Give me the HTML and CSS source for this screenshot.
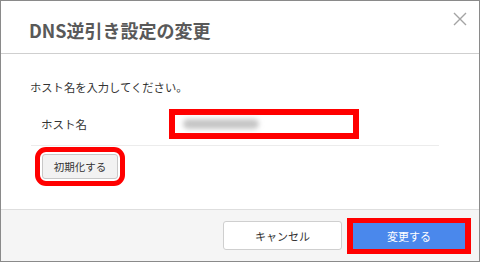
FILE: index.html
```html
<!DOCTYPE html>
<html lang="ja">
<head>
<meta charset="utf-8">
<link rel="stylesheet" href="styles.css">
</head>
<body>
<div class="dialog">
  <div class="header">
    <div class="title">DNS逆引き設定の変更</div>
    <div class="close"><svg width="14" height="14" viewBox="0 0 14 14"><path d="M1 1 L13 13 M13 1 L1 13" stroke="#a4a4a4" stroke-width="1.4" fill="none"/></svg></div>
  </div>
  <div class="body">
    <div class="intro">ホスト名を入力してください。</div>
    <div class="row">
      <div class="label">ホスト名</div>
      <div class="mark-box">
        <div class="input"><span class="blurred"></span></div>
      </div>
    </div>
    <div class="mark-round">
      <button class="btn-reset">初期化する</button>
    </div>
  </div>
  <div class="footer">
    <button class="btn-cancel">キャンセル</button>
    <div class="mark-primary">
      <button class="btn-primary">変更する</button>
    </div>
  </div>
</div>
</body>
</html>
```

FILE: styles.css
```css
* { box-sizing: border-box; }
html, body { margin: 0; padding: 0; background: #fff; }
body { font-family: "Noto Sans CJK JP", "Noto Sans", sans-serif; color: #333; }

.dialog {
  width: 480px;
  height: 262px;
  border: 1px solid #8a8a8a;
  display: flex;
  flex-direction: column;
  background: #fff;
}

.header {
  height: 53px;
  border-bottom: 1px solid #cfcfcf;
  display: flex;
  justify-content: space-between;
  align-items: flex-start;
  padding: 0 12px 0 28px;
  flex: none;
}
.title {
  margin-top: 18px;
  font-size: 18px;
  line-height: 22px;
  font-weight: bold;
  color: #595959;
}
.close {
  margin-top: 11px;
  width: 14px;
  height: 14px;
}
.close svg { display: block; }

.body {
  flex: 1;
  padding: 25px 0 0 29px;
}
.intro {
  font-size: 11.3px;
  line-height: 16px;
  color: #333;
}
.row {
  margin-top: 14px;
  margin-left: 1px;
  width: 408px;
  display: flex;
  align-items: center;
  padding: 0 0 6px 10px;
  border-bottom: 1px solid #ececec;
}
.label {
  width: 128px;
  font-size: 11.5px;
  color: #333;
}
.mark-box {
  width: 190px;
  height: 30px;
  border: 6px solid #ff0000;
  background: #fff;
}
.input {
  height: 100%;
  display: flex;
  align-items: center;
  padding-left: 8px;
}
.blurred {
  display: block;
  width: 76px;
  height: 10px;
  background: #c6c6c6;
  border-radius: 5px;
  filter: blur(2.5px);
}

.mark-round {
  display: inline-block;
  margin: 1px 0 0 5px;
  border: 5px solid #ff0000;
  border-radius: 11px;
  padding: 2px;
}
.btn-reset {
  display: block;
  width: 76px;
  height: 25px;
  padding: 0;
  border: 1px solid #c8c8c8;
  border-radius: 3px;
  background: #f2f2f2;
  font-family: inherit;
  font-size: 10.5px;
  color: #333;
}

.footer {
  flex: none;
  height: 52px;
  border-top: 1px solid #dedede;
  background: #f5f5f5;
  display: flex;
  justify-content: flex-end;
  align-items: center;
  gap: 5px;
  padding-right: 8px;
}
.btn-cancel {
  width: 119px;
  height: 29px;
  padding: 0;
  border: 1px solid #cfcfcf;
  border-radius: 3px;
  background: #fff;
  font-family: inherit;
  font-size: 11px;
  color: #333;
}
.mark-primary {
  border-style: solid;
  border-color: #ff0000;
  border-width: 5px 6px;
}
.btn-primary {
  display: block;
  width: 112px;
  height: 26px;
  padding: 0;
  border: none;
  background: #4a88ec;
  font-family: inherit;
  font-size: 11px;
  color: #fff;
}
```
